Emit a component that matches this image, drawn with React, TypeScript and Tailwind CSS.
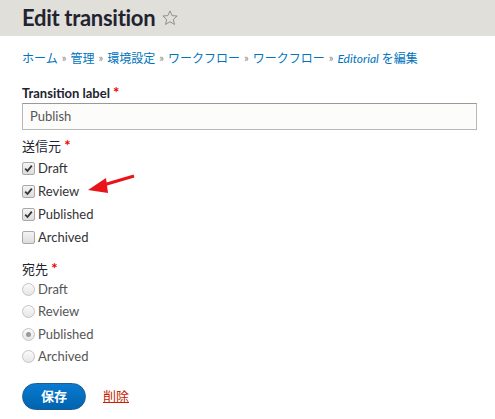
import React from "react";

const font = { fontFamily: 'Lato, "Noto Sans CJK JP", sans-serif' };

function Check({ checked, label }: { checked: boolean; label: string }) {
  return (
    <div className="flex items-center h-[23px]">
      <span className="w-[13px] h-[13px] border border-[#a9a9a9] rounded-[2px] bg-gradient-to-b from-[#f4f4f4] to-[#dcdcdc] flex items-center justify-center">
        {checked && (
          <svg width="9" height="9" viewBox="0 0 9 9">
            <path d="M1.2 4.6 L3.5 7 L7.8 1.6" stroke="#333" strokeWidth="1.8" fill="none" />
          </svg>
        )}
      </span>
      <span className="ml-[3px] text-[13px] text-[#333]">{label}</span>
    </div>
  );
}

function Radio({ checked, label }: { checked: boolean; label: string }) {
  return (
    <div className="flex items-center h-[22.5px]">
      <span className="w-[13px] h-[13px] border border-[#c4c4c4] rounded-full bg-gradient-to-b from-[#fafafa] to-[#e6e6e6] flex items-center justify-center">
        {checked && <span className="w-[5px] h-[5px] rounded-full bg-[#9a9a9a]" />}
      </span>
      <span className="ml-[3px] text-[13px] text-[#555]">{label}</span>
    </div>
  );
}

const Sep = () => <span className="text-[#8a8a80] mx-[4px] text-[11px]">»</span>;

export default function App() {
  return (
    <div className="w-[495px] h-[419px] bg-white relative overflow-hidden" style={font}>
      <div className="h-[36px] bg-[#e0dfd9] flex items-center pl-[22px]">
        <h1 className="text-[22px] font-bold text-[#222330] leading-none tracking-[-0.3px]">Edit transition</h1>
        <svg className="ml-[6px]" width="18" height="18" viewBox="0 0 24 24">
          <path d="M12 2.5 L14.8 8.8 L21.5 9.4 L16.4 13.9 L18 20.6 L12 17 L6 20.6 L7.6 13.9 L2.5 9.4 L9.2 8.8 Z" fill="none" stroke="#8e8d85" strokeWidth="1.3" strokeLinejoin="round" />
        </svg>
      </div>
      <div className="px-[22px]">
        <div className="mt-[14px] h-[17px] flex items-center text-[12px] text-[#0074bd]">
          <span>ホーム</span><Sep /><span>管理</span><Sep /><span>環境設定</span><Sep /><span>ワークフロー</span><Sep /><span>ワークフロー</span><Sep /><span><i>Editorial</i> を編集</span>
        </div>
        <div className="mt-[16px] text-[13px] font-bold text-[#222330] leading-[18px]">
          Transition label <span className="text-[#e00] text-[15px]">*</span>
        </div>
        <div className="mt-[1px] w-[455px] h-[27px] border border-[#b8b8b8] border-t-[#999] bg-[#fcfcfa] flex items-center px-[7px] text-[13px] text-[#555]">
          Publish
        </div>
        <div className="mt-[6px] text-[13px] text-[#222330] leading-[18px]">
          送信元 <span className="text-[#e00] text-[15px] font-bold">*</span>
        </div>
        <div className="mt-[2px]">
          <Check checked label="Draft" />
          <Check checked label="Review" />
          <Check checked label="Published" />
          <Check checked={false} label="Archived" />
        </div>
        <div className="mt-[10px] text-[13px] text-[#222330] leading-[18px]">
          宛先 <span className="text-[#e00] text-[15px] font-bold">*</span>
        </div>
        <div>
          <Radio checked={false} label="Draft" />
          <Radio checked={false} label="Review" />
          <Radio checked label="Published" />
          <Radio checked={false} label="Archived" />
        </div>
        <div className="mt-[15px] flex items-center">
          <button className="w-[64px] h-[27px] rounded-full bg-gradient-to-b from-[#0a7ad0] to-[#0064ae] border border-[#1e5c90] text-white text-[13px] font-bold">
            保存
          </button>
          <span className="ml-[17px] text-[13px] text-[#c72100] underline">削除</span>
        </div>
      </div>
      <svg className="absolute left-0 top-0" width="495" height="419" viewBox="0 0 495 419">
        <line x1="134" y1="176" x2="100" y2="186" stroke="#e8141a" strokeWidth="3" />
        <polygon points="88,190 106,178 108,193" fill="#e8141a" />
      </svg>
    </div>
  );
}
